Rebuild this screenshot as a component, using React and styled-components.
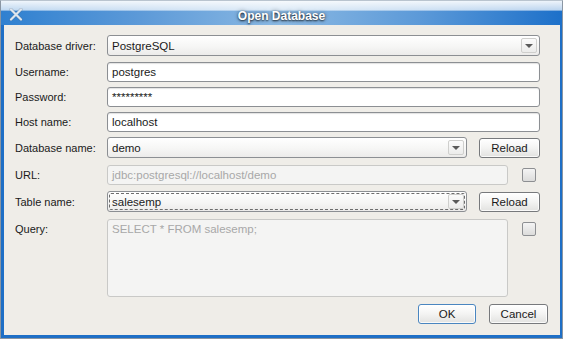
import React from "react";
import styled, { createGlobalStyle, css } from "styled-components";

const GlobalStyle = createGlobalStyle`
  html, body {
    margin: 0;
    padding: 0;
    background: #ffffff;
  }
  body {
    font-family: "Liberation Sans", Arial, sans-serif;
    font-size: 11px;
    color: #1a1a1a;
  }
`;

const Window = styled.div`
  width: 563px;
  height: 339px;
  box-sizing: border-box;
  border: 1px solid #8a96a3;
  border-top-color: #b9c4cf;
  background: #1e6fc6;
  display: flex;
  flex-direction: column;
  overflow: hidden;
`;

const TitleBar = styled.div`
  height: 24px;
  flex: none;
  display: flex;
  align-items: center;
  position: relative;
  background:
    linear-gradient(
      to bottom,
      rgba(255, 255, 255, 0.92) 0,
      rgba(255, 255, 255, 0.7) 38%,
      rgba(255, 255, 255, 0) 42%
    ),
    linear-gradient(to right, #2f80d0 0, #5d9ad8 25%, #8bb9e3 50%, #5b99d8 75%, #1d70c9 100%);
`;

const CloseIcon = styled.svg`
  position: absolute;
  left: 8px;
  top: 7px;
`;

const Title = styled.div`
  flex: 1;
  text-align: center;
  padding-top: 5px;
  font-weight: bold;
  font-size: 12px;
  color: #ffffff;
  text-shadow: 0 1px 2px rgba(0, 0, 0, 0.75), 0 0 4px rgba(0, 0, 0, 0.45);
`;

const Body = styled.div`
  flex: 1;
  margin: 0 2px 3px 3px;
  background: #efede8;
  padding: 10px 12px 0 11px;
  display: flex;
  flex-direction: column;
`;

const Form = styled.div`
  display: flex;
  flex-direction: column;
  gap: 5px;
  padding-right: 8px;
`;

const Row = styled.div`
  display: grid;
  grid-template-columns: 92px 1fr;
  align-items: ${(p) => (p.$top ? "start" : "center")};
  margin-top: ${(p) => p.$extra || 0}px;
`;

const Label = styled.label`
  padding-top: ${(p) => (p.$top ? "4px" : "0")};
`;

const Controls = styled.div`
  display: flex;
  align-items: ${(p) => (p.$top ? "flex-start" : "center")};
  gap: ${(p) => p.$gap || 12}px;
  padding-right: ${(p) => p.$pr || 0}px;
`;

const fieldBase = css`
  box-sizing: border-box;
  flex: 1;
  border: 1px solid #8c8f93;
  border-radius: 3px;
  padding: 0 4px;
  display: flex;
  align-items: center;
  font-size: 11.5px;
`;

const TextField = styled.div`
  ${fieldBase};
  height: 20px;
  background: #ffffff;
  box-shadow: inset 0 1px 1px rgba(0, 0, 0, 0.12);
  ${(p) =>
    p.$disabled &&
    css`
      background: #f4f4f3;
      border-color: #c9c9c7;
      color: #a8a8a8;
      box-shadow: none;
    `}
`;

const TextArea = styled.div`
  ${fieldBase};
  height: 78px;
  align-items: flex-start;
  padding-top: 3px;
  background: #f4f4f3;
  border-color: #c9c9c7;
  color: #a8a8a8;
`;

const Combo = styled.div`
  ${fieldBase};
  height: 21px;
  padding-right: 2px;
  background: linear-gradient(to bottom, #ffffff 0, #f6f6f5 55%, #ecebea 100%);
  position: relative;
  ${(p) =>
    p.$focused &&
    css`
      &::after {
        content: "";
        position: absolute;
        inset: 1px;
        border: 1px dashed #6d6d6d;
        border-radius: 2px;
        pointer-events: none;
      }
    `}
`;

const ComboText = styled.span`
  flex: 1;
`;

const ArrowBox = styled.span`
  width: 16px;
  height: 15px;
  box-sizing: border-box;
  border: 1px solid #cfcfcd;
  border-radius: 2px;
  background: linear-gradient(to bottom, #fbfbfb, #ececeb);
  display: flex;
  align-items: center;
  justify-content: center;
  &::before {
    content: "";
    border-left: 4px solid transparent;
    border-right: 4px solid transparent;
    border-top: 4px solid #5a5a5a;
  }
`;

const Button = styled.button`
  box-sizing: border-box;
  width: ${(p) => p.$w || 61}px;
  height: ${(p) => p.$h || 20}px;
  flex: none;
  font-family: "Liberation Sans", Arial, sans-serif;
  font-size: 11.5px;
  color: #1a1a1a;
  border: 1px solid ${(p) => (p.$default ? "#4a86c0" : "#77797c")};
  border-radius: 3px;
  background: linear-gradient(to bottom, #ffffff 0, #f5f5f4 45%, #e2e2e0 100%);
  box-shadow: inset 0 0 0 1px rgba(255, 255, 255, 0.8);
  padding: 0;
`;

const Check = styled.span`
  box-sizing: border-box;
  width: 14px;
  height: 14px;
  flex: none;
  margin-top: ${(p) => p.$mt || 0}px;
  border: 1px solid #8d8f92;
  border-radius: 2px;
  background: linear-gradient(to bottom, #f4f4f4, #dcdcdb);
`;

const ButtonBar = styled.div`
  display: flex;
  justify-content: flex-end;
  gap: 13px;
  margin-top: 7px;
`;

const ComboBox = ({ value, focused }) => (
  <Combo $focused={focused}>
    <ComboText>{value}</ComboText>
    <ArrowBox />
  </Combo>
);

export default function App() {
  return (
    <>
      <GlobalStyle />
      <Window>
        <TitleBar>
          <CloseIcon width="14" height="13" viewBox="0 0 14 13">
            <path d="M2 1.5 L12 11.5 M12 1.5 L2 11.5" stroke="#5a6d80" strokeWidth="3.2" strokeLinecap="round" opacity="0.35" />
            <path d="M2 1.5 L12 11.5 M12 1.5 L2 11.5" stroke="#dfe6ee" strokeWidth="2.2" strokeLinecap="round" />
          </CloseIcon>
          <Title>Open Database</Title>
        </TitleBar>
        <Body>
          <Form>
            <Row>
              <Label>Database driver:</Label>
              <Controls>
                <ComboBox value="PostgreSQL" />
              </Controls>
            </Row>
            <Row $extra={1}>
              <Label>Username:</Label>
              <Controls>
                <TextField>postgres</TextField>
              </Controls>
            </Row>
            <Row>
              <Label>Password:</Label>
              <Controls>
                <TextField>*********</TextField>
              </Controls>
            </Row>
            <Row>
              <Label>Host name:</Label>
              <Controls>
                <TextField>localhost</TextField>
              </Controls>
            </Row>
            <Row>
              <Label>Database name:</Label>
              <Controls>
                <ComboBox value="demo" />
                <Button>Reload</Button>
              </Controls>
            </Row>
            <Row $extra={2}>
              <Label>URL:</Label>
              <Controls $gap={14} $pr={4}>
                <TextField $disabled>jdbc:postgresql://localhost/demo</TextField>
                <Check />
              </Controls>
            </Row>
            <Row $extra={1}>
              <Label>Table name:</Label>
              <Controls>
                <ComboBox value="salesemp" focused />
                <Button>Reload</Button>
              </Controls>
            </Row>
            <Row $top $extra={2}>
              <Label $top>Query:</Label>
              <Controls $top $gap={14} $pr={4}>
                <TextArea>SELECT * FROM salesemp;</TextArea>
                <Check $mt={3} />
              </Controls>
            </Row>
          </Form>
          <ButtonBar>
            <Button $default $w={58}>OK</Button>
            <Button $w={59}>Cancel</Button>
          </ButtonBar>
        </Body>
      </Window>
    </>
  );
}
